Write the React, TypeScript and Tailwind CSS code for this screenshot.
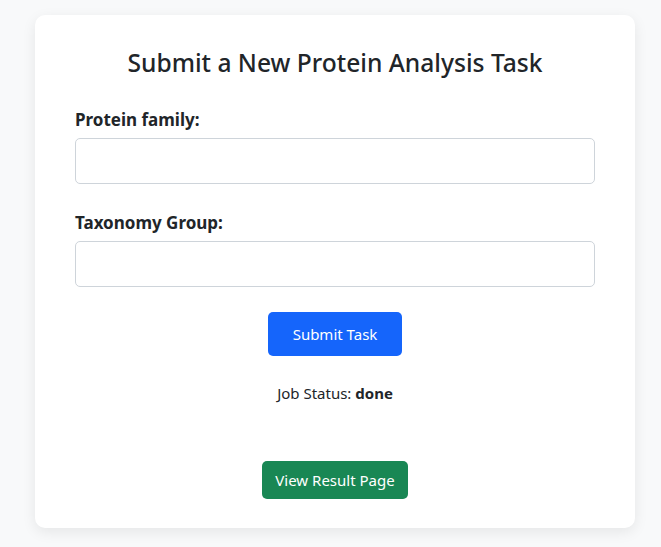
import React from 'react'

export default function App() {
    return (
        <div className="min-h-[547px] bg-[#f8f9fa] pt-[15px] pb-[19px] font-['Noto_Sans',sans-serif] text-[#212529]">
            <div className="ml-[35px] w-[600px] rounded-[10px] bg-white px-[40px] pt-[33px] pb-[29px] shadow-[0_4px_14px_rgba(0,0,0,0.08)]">
                <h3 className="text-center text-[24.6px] font-medium leading-[29px]">
                    Submit a New Protein Analysis Task
                </h3>

                <form className="mt-[30px]" onSubmit={(e) => e.preventDefault()}>
                    <label className="block text-[17px] font-bold leading-[26px]">Protein family:</label>
                    <input
                        type="text"
                        className="mt-[5px] block h-[46px] w-full rounded-[5px] border border-[#ced4da] px-3 outline-none"
                    />

                    <label className="mt-[26px] block text-[17px] font-bold leading-[26px]">Taxonomy Group:</label>
                    <input
                        type="text"
                        className="mt-[5px] block h-[46px] w-full rounded-[5px] border border-[#ced4da] px-3 outline-none"
                    />

                    <div className="mt-[25px] flex justify-center">
                        <button
                            type="submit"
                            className="h-[44px] w-[134px] rounded-[5px] bg-[#1565fb] text-[15px] text-white"
                        >
                            Submit Task
                        </button>
                    </div>
                </form>

                <p className="mt-[26px] text-center text-[15px] leading-[22px]">
                    Job Status: <strong className="font-bold">done</strong>
                </p>

                <div className="mt-[57px] flex justify-center">
                    <button className="h-[38px] w-[146px] rounded-[5px] bg-[#198754] text-[15px] text-white">
                        View Result Page
                    </button>
                </div>
            </div>
        </div>
    )
}
